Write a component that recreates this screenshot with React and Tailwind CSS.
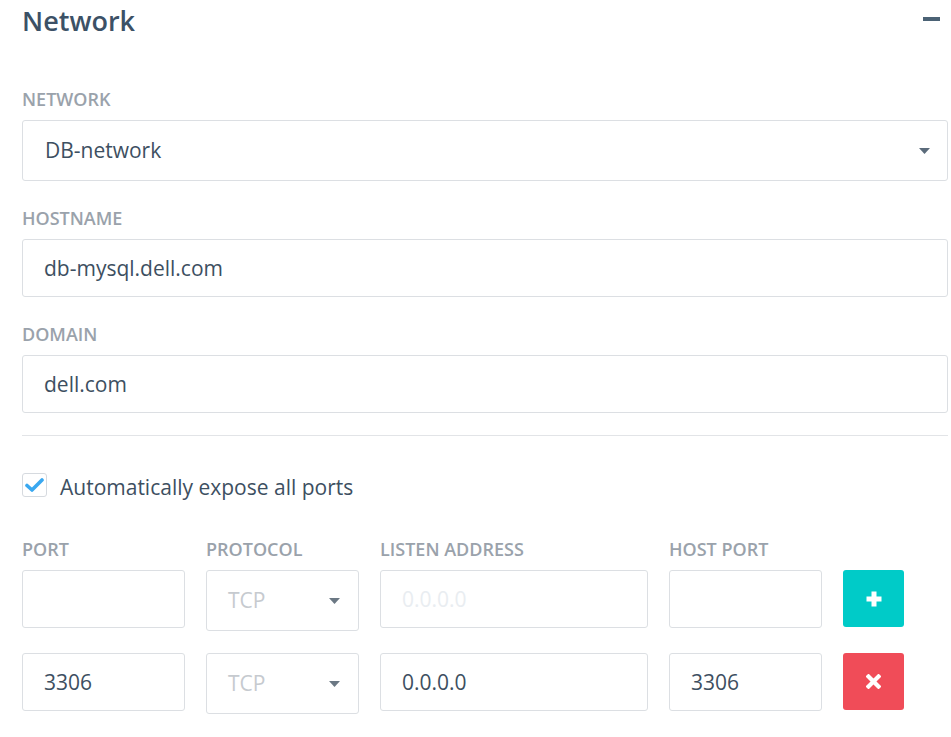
import React, { useState } from 'react';

const FONT = { fontFamily: '"Open Sans", "Noto Sans", sans-serif' };

function Label({ children }) {
  return (
    <div className="h-[24px] leading-[24px] mb-[9px] text-[18px] font-semibold text-[#9aa2ab] uppercase whitespace-nowrap">
      {children}
    </div>
  );
}

function Caret({ className = '' }) {
  return (
    <svg width="11" height="6" viewBox="0 0 11 6" className={className}>
      <path d="M0 0 H11 L5.5 6 Z" fill="currentColor" />
    </svg>
  );
}

function TextBox({ value, placeholder, className = '' }) {
  return (
    <div className={`h-[58px] border border-[#dcdfe3] rounded-[3px] bg-white flex items-center pl-[21px] pt-[2px] text-[21px] ${className}`}>
      {value ? (
        <span className="text-[#3d4f61]">{value}</span>
      ) : (
        <span className="text-[#e9edf1]">{placeholder}</span>
      )}
    </div>
  );
}

function SmallSelect() {
  return (
    <div className="w-[153px] h-[61px] border border-[#dcdfe3] rounded-[3px] bg-white flex items-center justify-between pl-[21px] pr-[18px] text-[21px]">
      <span className="text-[#c6cacf] pt-[1px]">TCP</span>
      <Caret className="text-[#6b7884]" />
    </div>
  );
}

function PortRow({ port, address, hostPort, first }) {
  return (
    <div className="flex items-start gap-[21px]">
      <TextBox value={port} className="w-[163px]" />
      <SmallSelect />
      <TextBox value={address} placeholder="0.0.0.0" className="w-[268px]" />
      <TextBox value={hostPort} className="w-[153px]" />
      {first ? (
        <button className="w-[61px] h-[57px] rounded-[3px] bg-[#00cbc8] flex items-center justify-center">
          <svg width="16" height="16" viewBox="0 0 16 16">
            <path d="M8 0.5 V15.5 M0.5 8 H15.5" stroke="white" strokeWidth="5" />
          </svg>
        </button>
      ) : (
        <button className="w-[61px] h-[57px] rounded-[3px] bg-[#f04c58] flex items-center justify-center">
          <svg width="15" height="15" viewBox="0 0 15 15">
            <path d="M2.5 2.5 L12.5 12.5 M12.5 2.5 L2.5 12.5" stroke="white" strokeWidth="4.2" strokeLinecap="square" />
          </svg>
        </button>
      )}
    </div>
  );
}

export default function App() {
  const [expose, setExpose] = useState(true);

  return (
    <div className="w-[951px] h-[737px] bg-white pl-[22px] pr-[3px] overflow-hidden" style={FONT}>
      {/* Header */}
      <div className="h-[42px] flex items-center justify-between">
        <h2 className="text-[27px] leading-[42px] font-semibold text-[#3c5166]">Network</h2>
        <div className="w-[17px] h-[4px] bg-[#4b6275] mr-[8px] -mt-[4px]" />
      </div>

      <div className="mt-[45px]">
        <Label>Network</Label>
        <div className="h-[61px] border border-[#dcdfe3] rounded-[3px] flex items-center justify-between pl-[22px] pr-[17px] text-[21px] text-[#3d4f61]">
          <span className="pt-[1px]">DB-network</span>
          <Caret className="text-[#5b6b7b]" />
        </div>
      </div>

      <div className="mt-[25px]">
        <Label>Hostname</Label>
        <TextBox value="db-mysql.dell.com" />
      </div>

      <div className="mt-[25px]">
        <Label>Domain</Label>
        <TextBox value="dell.com" />
      </div>

      <div className="mt-[22px] border-t border-[#e2e4e7]" />

      <label className="mt-[37px] h-[24px] flex items-center gap-[13px] cursor-pointer" onClick={() => setExpose(!expose)}>
        <span className="w-[25px] h-[24px] border border-[#d6dadf] rounded-[3px] flex items-center justify-center">
          {expose && (
            <svg width="19" height="14" viewBox="0 0 19 14">
              <path d="M2 7.5 L7 12 L17 2" fill="none" stroke="#3aa8f0" strokeWidth="3.6" strokeLinecap="round" strokeLinejoin="round" />
            </svg>
          )}
        </span>
        <span className="text-[21px] text-[#3d4f61] leading-[24px] translate-y-[2px]">Automatically expose all ports</span>
      </label>

      <div className="mt-[40px] flex gap-[21px]">
        <div className="w-[163px]"><Label>Port</Label></div>
        <div className="w-[153px]"><Label>Protocol</Label></div>
        <div className="w-[268px]"><Label>Listen Address</Label></div>
        <div className="w-[153px]"><Label>Host Port</Label></div>
      </div>

      <div className="flex flex-col gap-[22px]">
        <PortRow first />
        <PortRow port="3306" address="0.0.0.0" hostPort="3306" />
      </div>
    </div>
  );
}
